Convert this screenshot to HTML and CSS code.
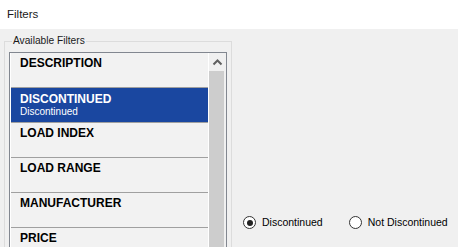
FILE: index.html
```html
<!DOCTYPE html>
<html>
<head>
<meta charset="utf-8">
<link rel="stylesheet" href="styles.css">
</head>
<body>
<div class="header">Filters</div>
<div class="main">
  <fieldset class="group">
    <legend class="legend">Available Filters</legend>
    <div class="listbox">
      <div class="items">
        <div class="row"><div class="title">DESCRIPTION</div></div>
        <div class="row selected"><div class="title">DISCONTINUED</div><div class="sub">Discontinued</div></div>
        <div class="row"><div class="title">LOAD INDEX</div></div>
        <div class="row"><div class="title">LOAD RANGE</div></div>
        <div class="row"><div class="title">MANUFACTURER</div></div>
        <div class="row"><div class="title">PRICE</div></div>
      </div>
      <div class="scrollbar">
        <div class="arrow">
          <svg width="17" height="17" viewBox="0 0 17 17"><polyline points="4.5,11.5 8.5,7.5 12.5,11.5" fill="none" stroke="#606060" stroke-width="2"/></svg>
        </div>
        <div class="thumb"></div>
      </div>
    </div>
  </fieldset>
  <div class="options">
    <label class="radio"><span class="circle checked"></span><span class="rlabel">Discontinued</span></label>
    <label class="radio"><span class="circle"></span><span class="rlabel">Not Discontinued</span></label>
  </div>
</div>
</body>
</html>
```
FILE: styles.css
```css
html, body {
  margin: 0;
  padding: 0;
  height: 247px;
  overflow: hidden;
}
body {
  background: #f0f0f0;
  font-family: "Liberation Sans", Arial, sans-serif;
  color: #000;
}
.header {
  height: 29px;
  background: #fff;
  display: flex;
  align-items: center;
  padding-left: 7px;
  padding-bottom: 1px;
  box-sizing: border-box;
  font-size: 11.5px;
  color: #1a1a1a;
}
.main {
  display: flex;
  align-items: flex-start;
}
.group {
  margin: 6px 0 0 4px;
  padding: 5px 4px 0 4px;
  border: 1px solid #dcdcdc;
  width: 218px;
  height: 240px;
  box-sizing: content-box;
  min-width: 0;
}
.legend {
  font-size: 10.2px;
  line-height: 12px;
  padding: 0 1px;
  margin-left: 3px;
  color: #1a1a1a;
}
.listbox {
  border: 1px solid #828790;
  border-bottom: none;
  background: #fff;
  padding-left: 1px;
  display: flex;
  gap: 1px;
  height: 240px;
}
.items {
  width: 197px;
  background: #f2f2f2;
}
.row {
  height: 35px;
  box-sizing: border-box;
  border-bottom: 1px solid #a0a0a0;
  padding: 3px 0 0 9px;
}
.row .title {
  font-weight: bold;
  font-size: 12px;
  line-height: 14px;
  color: #000;
}
.row .sub {
  font-size: 10px;
  line-height: 12px;
}
.row.selected {
  background: #1a47a0;
  color: #fff;
  padding-top: 4px;
}
.row.selected .title {
  color: #fff;
}
.scrollbar {
  width: 17px;
  background: #f0f0f0;
  display: flex;
  flex-direction: column;
}
.arrow {
  height: 18px;
}
.arrow svg {
  display: block;
}
.thumb {
  width: 15px;
  flex: 1;
  background: #cdcdcd;
}
.options {
  padding: 187px 0 0 11px;
  display: flex;
  gap: 26px;
}
.radio {
  display: flex;
  align-items: center;
  gap: 6px;
  font-size: 10.5px;
  line-height: 13px;
  color: #000;
}
.circle {
  width: 13px;
  height: 13px;
  box-sizing: border-box;
  border: 1px solid #333;
  border-radius: 50%;
  background: #fff;
  display: flex;
  align-items: center;
  justify-content: center;
}
.circle.checked::after {
  content: "";
  width: 6px;
  height: 6px;
  border-radius: 50%;
  background: #222;
}
```
